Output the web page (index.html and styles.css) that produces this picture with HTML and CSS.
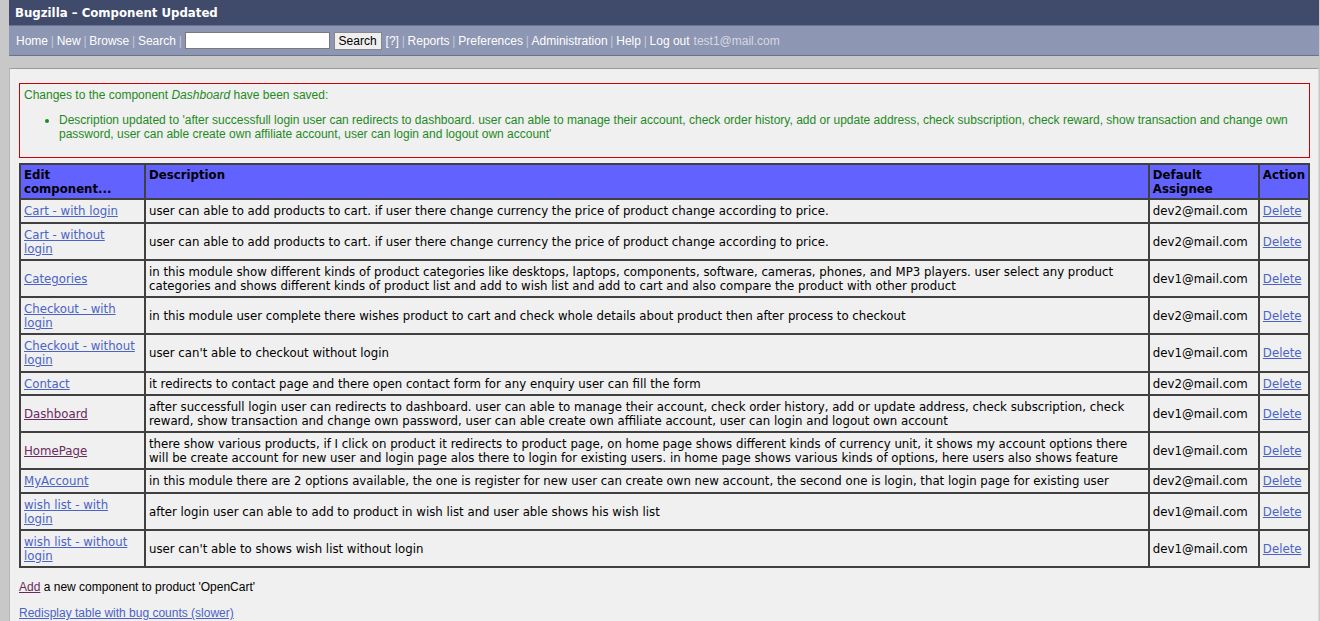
FILE: index.html
```html
<!DOCTYPE html>
<html>
<head>
<meta charset="utf-8">
<title>Bugzilla – Component Updated</title>
<link rel="stylesheet" href="styles.css">
</head>
<body>
<div class="page">
  <div class="titlebar">Bugzilla &ndash; Component Updated</div>
  <div class="nav">
    <a href="#">Home</a><span class="sep">|</span>
    <a href="#">New</a><span class="sep">|</span>
    <a href="#">Browse</a><span class="sep">|</span>
    <a href="#">Search</a><span class="sep">|</span>
    <input class="quick" type="text">
    <button class="btn">Search</button>
    <a href="#">[?]</a><span class="sep">|</span>
    <a href="#">Reports</a><span class="sep">|</span>
    <a href="#">Preferences</a><span class="sep">|</span>
    <a href="#">Administration</a><span class="sep">|</span>
    <a href="#">Help</a><span class="sep">|</span>
    <a href="#">Log out</a><span class="user">test1@mail.com</span>
  </div>
  <div class="content">
    <div class="message">
      <p class="msg-head">Changes to the component <em>Dashboard</em> have been saved:</p>
      <ul class="msg-list">
        <li>Description updated to 'after successfull login user can redirects to dashboard. user can able to manage their account, check order history, add or update address, check subscription, check reward, show transaction and change own password, user can able create own affiliate account, user can login and logout own account'</li>
      </ul>
    </div>
    <table class="comps">
      <colgroup>
        <col class="c1"><col class="c2"><col class="c3"><col class="c4">
      </colgroup>
      <thead>
        <tr><th>Edit component...</th><th>Description</th><th>Default Assignee</th><th>Action</th></tr>
      </thead>
      <tbody>
        <tr><td><a href="#">Cart - with login</a></td><td>user can able to add products to cart. if user there change currency the price of product change according to price.</td><td>dev2@mail.com</td><td><a href="#">Delete</a></td></tr>
        <tr><td><a href="#">Cart - without login</a></td><td>user can able to add products to cart. if user there change currency the price of product change according to price.</td><td>dev2@mail.com</td><td><a href="#">Delete</a></td></tr>
        <tr><td><a href="#">Categories</a></td><td>in this module show different kinds of product categories like desktops, laptops, components, software, cameras, phones, and MP3 players. user select any product categories and shows different kinds of product list and add to wish list and add to cart and also compare the product with other product</td><td>dev1@mail.com</td><td><a href="#">Delete</a></td></tr>
        <tr><td><a href="#">Checkout - with login</a></td><td>in this module user complete there wishes product to cart and check whole details about product then after process to checkout</td><td>dev2@mail.com</td><td><a href="#">Delete</a></td></tr>
        <tr><td><a href="#">Checkout - without login</a></td><td>user can't able to checkout without login</td><td>dev1@mail.com</td><td><a href="#">Delete</a></td></tr>
        <tr><td><a href="#">Contact</a></td><td>it redirects to contact page and there open contact form for any enquiry user can fill the form</td><td>dev2@mail.com</td><td><a href="#">Delete</a></td></tr>
        <tr><td><a class="visited" href="#">Dashboard</a></td><td>after successfull login user can redirects to dashboard. user can able to manage their account, check order history, add or update address, check subscription, check reward, show transaction and change own password, user can able create own affiliate account, user can login and logout own account</td><td>dev1@mail.com</td><td><a href="#">Delete</a></td></tr>
        <tr><td><a class="visited" href="#">HomePage</a></td><td>there show various products, if I click on product it redirects to product page, on home page shows different kinds of currency unit, it shows my account options there will be create account for new user and login page alos there to login for existing users. in home page shows various kinds of options, here users also shows feature</td><td>dev1@mail.com</td><td><a href="#">Delete</a></td></tr>
        <tr><td><a href="#">MyAccount</a></td><td>in this module there are 2 options available, the one is register for new user can create own new account, the second one is login, that login page for existing user</td><td>dev2@mail.com</td><td><a href="#">Delete</a></td></tr>
        <tr><td><a href="#">wish list - with login</a></td><td>after login user can able to add to product in wish list and user able shows his wish list</td><td>dev1@mail.com</td><td><a href="#">Delete</a></td></tr>
        <tr><td><a href="#">wish list - without login</a></td><td>user can't able to shows wish list without login</td><td>dev1@mail.com</td><td><a href="#">Delete</a></td></tr>
      </tbody>
    </table>
    <p class="foot"><a class="visited" href="#">Add</a> a new component to product 'OpenCart'</p>
    <p class="foot"><a href="#">Redisplay table with bug counts (slower)</a></p>
  </div>
</div>
</body>
</html>
```

FILE: styles.css
```css
html, body {
  margin: 0;
  padding: 0;
  background: #c8c8c8;
  height: 100%;
  overflow: hidden;
}
.page {
  margin-left: 9px;
  margin-right: 1px;
  font-family: "Liberation Sans", Arial, sans-serif;
  font-size: 12px;
}
.titlebar {
  background: #404b6b;
  color: #ffffff;
  font-family: "DejaVu Sans", Verdana, sans-serif;
  font-weight: bold;
  font-size: 11.75px;
  height: 25px;
  line-height: 26px;
  padding-left: 6px;
  border-bottom: 1px solid #6a7391;
}
.nav {
  background: #8d96b2;
  height: 29px;
  display: flex;
  align-items: center;
  padding-left: 7px;
  color: #ffffff;
  border-bottom: 1px solid #6b7390;
  font-size: 12px;
  white-space: nowrap;
}
.nav a {
  color: #ffffff;
  text-decoration: none;
}
.nav .sep {
  color: #c4c9d8;
  margin: 0 2.75px;
}
.quick {
  width: 141px;
  height: 15px;
  border: 1px solid #7a7a7a;
  padding: 0 1px;
  margin: 0 4px 0 0;
  background: #ffffff;
}
.btn {
  font-family: "Liberation Sans", Arial, sans-serif;
  font-size: 12px;
  height: 18px;
  padding: 0 4px;
  margin: 0 4px 0 0;
  background: #efefef;
  border: 1px solid #888;
  border-radius: 0;
  color: #000;
  line-height: 14px;
}
.user {
  color: #d6d9e4;
  margin-left: 4px;
}
.content {
  margin-top: 12px;
  background: #f0f0f0;
  border-top: 1px solid #9a9a9a;
  border-left: 1px solid #b8b8b8;
  border-right: 1px solid #d8d8d8;
  padding: 14px 8px 0 9px;
  height: 540px;
}
.message {
  border: 1px solid #cc0000;
  color: #1f8a1f;
  padding: 4px 4px 16px 4px;
  margin-bottom: 5px;
}
.msg-head {
  margin: 0 0 11px 0;
  line-height: 14px;
}
.msg-list {
  margin: 0;
  padding-left: 35px;
  line-height: 14px;
}
.msg-list li {
  list-style: disc;
}
.comps {
  width: 100%;
  border-collapse: collapse;
  border: 2px solid #404040;
  font-family: "DejaVu Sans", Verdana, sans-serif;
  font-size: 11.75px;
  color: #000;
}
.c1 { width: 125px; }
.c3 { width: 110px; }
.c4 { width: 50px; }
.comps th {
  background: #6262ff;
  text-align: left;
  vertical-align: top;
  font-weight: bold;
  line-height: 14px;
  padding: 3px 3px 2px 3px;
  border: 2px solid #404040;
}
.comps td {
  border: 2px solid #404040;
  padding: 4px 3px 3px 3px;
  line-height: 14px;
  vertical-align: middle;
}
.comps tbody tr:nth-child(odd) td {
  padding-bottom: 3.5px;
}
.comps td:first-child {
  padding-right: 9px;
}
.comps a {
  color: #4a63c6;
}
.comps a.visited, .foot a.visited {
  color: #6b2a5e;
}
.foot {
  margin: 12px 0 0 0;
  line-height: 14px;
}
.foot + .foot {
  margin-top: 12px;
}
.foot a {
  color: #4a63c6;
}
```
